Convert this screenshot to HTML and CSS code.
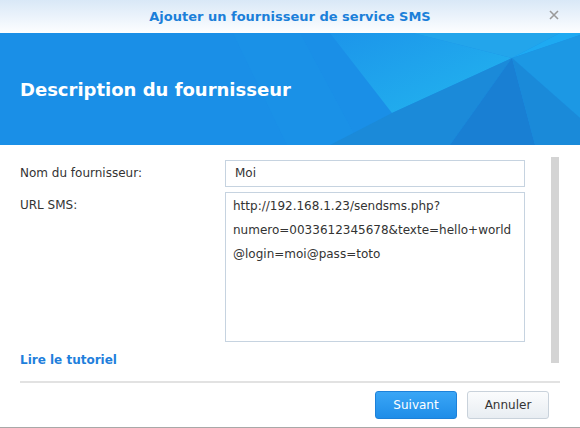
FILE: index.html
```html
<!DOCTYPE html>
<html lang="fr">
<head>
    <meta charset="UTF-8">
    <meta name="viewport" content="width=device-width, initial-scale=1.0">
    <title>Ajouter un fournisseur de service SMS</title>
    <link rel="stylesheet" href="styles.css">
</head>
<body>
    <div class="dialog">
        <div class="title-bar">
            <span class="title">Ajouter un fournisseur de service SMS</span>
            <span class="close-btn">
                <svg width="10" height="10" viewBox="0 0 10 10">
                    <path d="M1 1 L9 9 M9 1 L1 9" stroke="#9a9a9a" stroke-width="1.6" fill="none"/>
                </svg>
            </span>
        </div>

        <div class="banner">
            <svg class="banner-art" width="580" height="112" viewBox="0 0 580 112" preserveAspectRatio="none">
                <defs>
                    <linearGradient id="glow" x1="0" y1="0" x2="1" y2="1">
                        <stop offset="0" stop-color="#1c95ea"/>
                        <stop offset="1" stop-color="#23b6ef"/>
                    </linearGradient>
                </defs>
                <polygon points="233,0 300,0 360,112 287,112" fill="#1a92e8" opacity="0.6"/>
                <polygon points="330,0 413,0 512,25 392,80" fill="url(#glow)"/>
                <polygon points="413,0 560,0 512,25" fill="#23a5eb"/>
                <polygon points="560,0 580,0 580,2 512,25" fill="#1eaaf2"/>
                <polygon points="392,80 512,25 450,112 330,112" fill="#1b8ad9"/>
                <polygon points="512,25 535,112 450,112" fill="#197fd3"/>
                <polygon points="512,25 580,2 580,85" fill="#1c98e4"/>
                <polygon points="512,25 580,85 580,112 535,112" fill="#1a8ad9"/>
            </svg>
            <h2 class="banner-title">Description du fournisseur</h2>
        </div>

        <div class="panel">
            <div class="fields">
                <div class="form-row">
                    <label class="field-label">Nom du fournisseur:</label>
                    <div class="text-input">Moi</div>
                </div>
                <div class="form-row">
                    <label class="field-label">URL SMS:</label>
                    <div class="text-area">
                        <div>http://192.168.1.23/sendsms.php?</div>
                        <div>numero=0033612345678&amp;texte=hello+world</div>
                        <div>@login=moi@pass=toto</div>
                    </div>
                </div>
                <a class="tutorial-link" href="#">Lire le tutoriel</a>
            </div>
            <div class="scrollbar"></div>
        </div>

        <div class="footer">
            <button class="btn btn-primary">Suivant</button>
            <button class="btn btn-default">Annuler</button>
        </div>
    </div>
</body>
</html>
```

FILE: styles.css
```css
body {
    margin: 0;
    font-family: "DejaVu Sans", Verdana, sans-serif;
    font-size: 12px;
    color: #333;
    background-color: #fff;
}

.dialog {
    width: 580px;
    height: 427px;
    border-bottom: 1px solid #a8a8a8;
    display: flex;
    flex-direction: column;
}

/* barre de titre */
.title-bar {
    height: 33px;
    display: flex;
    align-items: center;
    justify-content: center;
    position: relative;
    background: linear-gradient(to bottom, #d9e8f7, #fdfeff);
}

.title {
    color: #1b7fd9;
    font-weight: bold;
    font-size: 13px;
}

.close-btn {
    position: absolute;
    right: 21px;
    top: 10px;
    width: 10px;
    height: 10px;
}

.close-btn svg {
    display: block;
}

/* bandeau bleu */
.banner {
    height: 112px;
    background-color: #1a8fe7;
    position: relative;
    overflow: hidden;
    display: flex;
    align-items: center;
}

.banner-art {
    position: absolute;
    left: 0;
    top: 0;
}

.banner-title {
    position: relative;
    margin: 0 0 0 20px;
    color: #fff;
    font-size: 18px;
    font-weight: bold;
}

/* formulaire */
.panel {
    height: 225px;
    display: flex;
    padding: 12px 21px 0 20px;
    box-sizing: border-box;
}

.fields {
    flex: 1;
    padding-top: 3px;
}

.form-row {
    display: flex;
    align-items: flex-start;
    margin-bottom: 5px;
}

.field-label {
    width: 205px;
    line-height: 27px;
    color: #333;
}

.text-input {
    width: 300px;
    height: 27px;
    box-sizing: border-box;
    border: 1px solid #c6d3e0;
    padding-left: 9px;
    line-height: 25px;
}

.text-area {
    width: 300px;
    height: 150px;
    box-sizing: border-box;
    border: 1px solid #c6d3e0;
    padding: 1px 7px;
    line-height: 24px;
}

.tutorial-link {
    display: block;
    margin-top: 11px;
    color: #1f7fdc;
    font-weight: bold;
    text-decoration: none;
}

.scrollbar {
    width: 8px;
    height: 206px;
    background-color: #d4d4d4;
    margin-left: 26px;
}

/* pied */
.footer {
    flex: 1;
    margin: 11px 20px 0 20px;
    border-top: 2px solid #e2e2e2;
    display: flex;
    justify-content: flex-end;
    align-items: flex-start;
    padding: 8px 11px 0 0;
    gap: 10px;
}

.btn {
    height: 28px;
    border-radius: 3px;
    font-family: "DejaVu Sans", Verdana, sans-serif;
    font-size: 12px;
    padding: 0;
    width: 82px;
}

.btn-primary {
    color: #fff;
    background: linear-gradient(to bottom, #3aa6f6, #1f8de8);
    border: 1px solid #1d81d9;
}

.btn-default {
    color: #333;
    background: linear-gradient(to bottom, #fbfcfd, #e8edf2);
    border: 1px solid #c9d2db;
}
```
